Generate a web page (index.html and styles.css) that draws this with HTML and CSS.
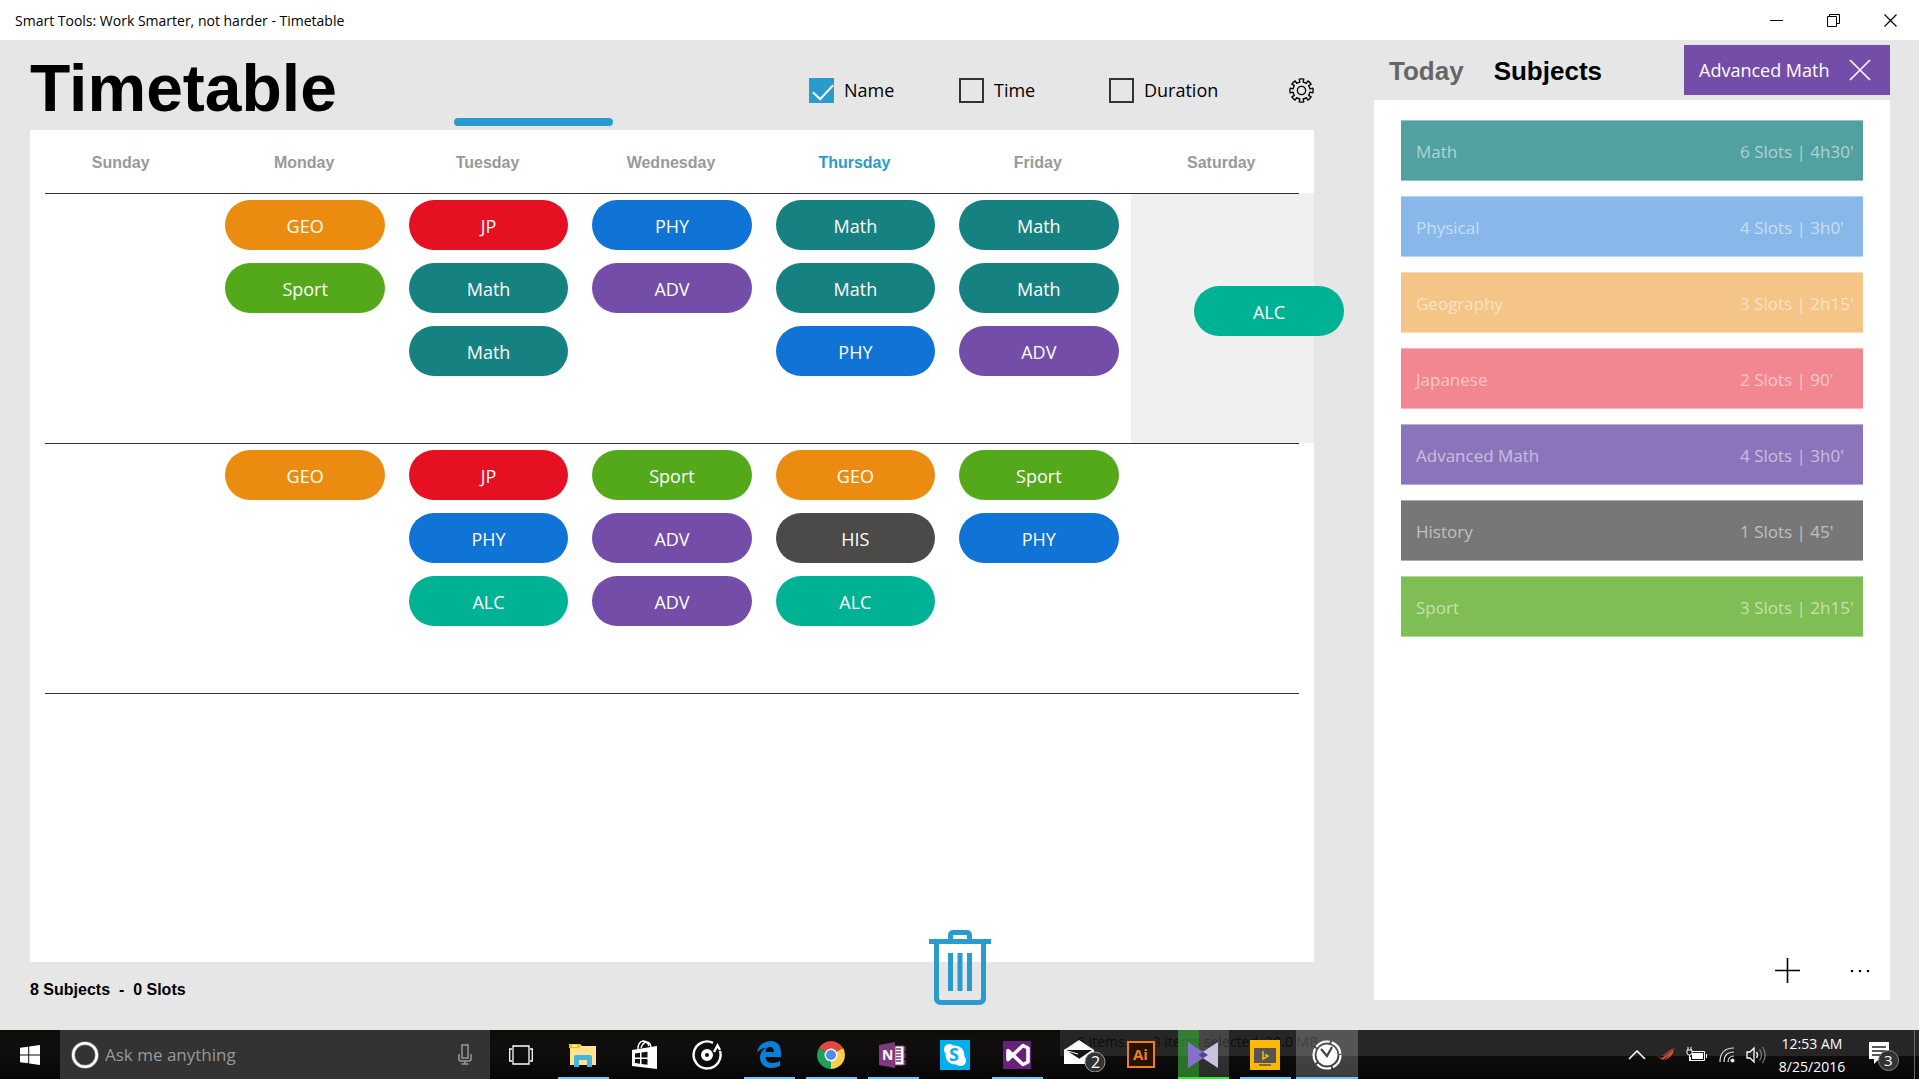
FILE: index.html
```html
<!DOCTYPE html>
<html lang="en">
<head>
    <meta charset="UTF-8">
    <title>Smart Tools: Work Smarter, not harder - Timetable</title>
    <link rel="stylesheet" href="styles.css">
</head>
<body>
    <header class="titlebar">
        <span>Smart Tools: Work Smarter, not harder - Timetable</span>
        <div class="window-controls">
            <button type="button" aria-label="Minimize"><svg width="13" height="13"><path d="M0 6.5h13" stroke="#000"/></svg></button>
            <button type="button" aria-label="Restore"><svg width="13" height="13" fill="none" stroke="#000"><path d="M.5 2.5h9v10h-9zM2.500 2.500v-2h10v9h-3"/></svg></button>
            <button type="button" aria-label="Close"><svg width="13" height="13"><path d="M.5.5l12 12M12.500.5l-12 12" stroke="#000" stroke-width="1.200"/></svg></button>
        </div>
    </header>

    <div class="app">
        <main class="main">
            <div class="toolbar">
                <h1>Timetable</h1>
                <div class="indicator"></div>
                <div class="options">
                    <label class="option"><input type="checkbox" checked>Name</label>
                    <label class="option"><input type="checkbox">Time</label>
                    <label class="option"><input type="checkbox">Duration</label>
                    <button type="button" class="icon-btn settings" aria-label="Settings">
                        <svg width="25" height="25" viewBox="0 0 26 26" fill="none" stroke="#000" stroke-width="1.4" stroke-linejoin="round">
                            <circle cx="13" cy="13" r="4.300"/>
                            <path d="M11.300 4.200L10.600 1.200A12 12 0 0 1 15.400 1.200L14.700 4.200A9 9 0 0 1 18 5.600L19.600 3A12 12 0 0 1 23 6.400L20.400 8A9 9 0 0 1 21.800 11.300L24.800 10.600A12 12 0 0 1 24.800 15.400L21.800 14.700A9 9 0 0 1 20.400 18L23 19.600A12 12 0 0 1 19.600 23L18 20.400A9 9 0 0 1 14.700 21.800L15.400 24.800A12 12 0 0 1 10.600 24.800L11.300 21.800A9 9 0 0 1 8 20.400L6.400 23A12 12 0 0 1 3 19.600L5.600 18A9 9 0 0 1 4.200 14.700L1.200 15.400A12 12 0 0 1 1.200 10.600L4.200 11.300A9 9 0 0 1 5.600 8L3 6.400A12 12 0 0 1 6.400 3L8 5.600A9 9 0 0 1 11.300 4.200Z"/>
                        </svg>
                    </button>
                </div>
            </div>

            <div class="board">
                <table class="timetable">
                    <thead>
                        <tr>
                            <th>Sunday</th>
                            <th>Monday</th>
                            <th>Tuesday</th>
                            <th>Wednesday</th>
                            <th class="current">Thursday</th>
                            <th>Friday</th>
                            <th>Saturday</th>
                        </tr>
                    </thead>
                    <tbody>
                        <tr>
                            <td></td>
                            <td><div class="slot geo">GEO</div><div class="slot sport">Sport</div></td>
                            <td><div class="slot jp">JP</div><div class="slot math">Math</div><div class="slot math">Math</div></td>
                            <td><div class="slot phy">PHY</div><div class="slot adv">ADV</div></td>
                            <td><div class="slot math">Math</div><div class="slot math">Math</div><div class="slot phy">PHY</div></td>
                            <td><div class="slot math">Math</div><div class="slot math">Math</div><div class="slot adv">ADV</div></td>
                            <td class="drop"></td>
                        </tr>
                        <tr>
                            <td></td>
                            <td><div class="slot geo">GEO</div></td>
                            <td><div class="slot jp">JP</div><div class="slot phy">PHY</div><div class="slot alc">ALC</div></td>
                            <td><div class="slot sport">Sport</div><div class="slot adv">ADV</div><div class="slot adv">ADV</div></td>
                            <td><div class="slot geo">GEO</div><div class="slot his">HIS</div><div class="slot alc">ALC</div></td>
                            <td><div class="slot sport">Sport</div><div class="slot phy">PHY</div></td>
                            <td></td>
                        </tr>
                        <tr>
                            <td></td>
                            <td></td>
                            <td></td>
                            <td></td>
                            <td></td>
                            <td></td>
                            <td></td>
                        </tr>
                    </tbody>
                </table>
                <div class="slot alc dragging">ALC</div>
                <button type="button" class="icon-btn trash" aria-label="Delete">
                    <svg width="62" height="76" viewBox="0 0 62 76" fill="none" stroke="#2b9bcd" stroke-width="5">
                        <path d="M0 11.500h62M21.500 11V5.500q0-3 3-3h13q3 0 3 3V11M7.500 12v56q0 4.500 4.500 4.500h38q4.500 0 4.500-4.500V12M21.500 23v38M31 23v38M40.500 23v38"/>
                    </svg>
                </button>
            </div>

            <p class="summary">8 Subjects&nbsp; -&nbsp; 0 Slots</p>
        </main>

        <aside class="sidebar">
            <div class="tabs">
                <button type="button" class="tab">Today</button>
                <button type="button" class="tab active">Subjects</button>
                <button type="button" class="selected-subject">Advanced Math
                    <svg width="22" height="22"><path d="M1 1l20 20M21 1L1 21" stroke="#fff" stroke-width="1.700"/></svg>
                </button>
            </div>
            <div class="panel">
                <ul class="subjects">
                    <li class="s-math"><span>Math</span><span>6 Slots | 4h30'</span></li>
                    <li class="s-phy"><span>Physical</span><span>4 Slots | 3h0'</span></li>
                    <li class="s-geo"><span>Geography</span><span>3 Slots | 2h15'</span></li>
                    <li class="s-jp"><span>Japanese</span><span>2 Slots | 90'</span></li>
                    <li class="s-adv"><span>Advanced Math</span><span>4 Slots | 3h0'</span></li>
                    <li class="s-his"><span>History</span><span>1 Slots | 45'</span></li>
                    <li class="s-sport"><span>Sport</span><span>3 Slots | 2h15'</span></li>
                </ul>
                <div class="commands">
                    <button type="button" class="icon-btn" aria-label="Add subject"><svg width="25" height="25"><path d="M0 12.500h25M12.500 0v25" stroke="#000" stroke-width="1.600"/></svg></button>
                    <button type="button" class="icon-btn" aria-label="More"><svg width="20" height="4"><circle cx="2" cy="2" r="1.300"/><circle cx="10" cy="2" r="1.300"/><circle cx="18" cy="2" r="1.300"/></svg></button>
                </div>
            </div>
        </aside>
    </div>

    <footer class="taskbar">
        <div class="behind"><span>6 items</span><span>3 items selected&nbsp; 20.0 MB</span></div>
        <button type="button" class="start" aria-label="Start">
            <svg width="20" height="20" fill="#fff"><path d="M0 2.800l8.200-1.100v7.800H0zM9.200 1.500L20 0v9.500H9.200zM0 10.500h8.200v7.800L0 17.200zM9.200 10.500H20V20L9.200 18.500z"/></svg>
        </button>
        <div class="search">
            <svg width="28" height="28"><circle cx="14" cy="14" r="11.800" fill="none" stroke="#777" stroke-width="4"/><circle cx="14" cy="14" r="11.800" fill="none" stroke="#fff" stroke-width="2.600"/></svg>
            <input type="text" placeholder="Ask me anything" aria-label="Search">
            <svg width="14" height="21" fill="none" stroke="#999" stroke-width="1.500"><path d="M4 1h6v13H4zM1 10v5q0 2 2 2h8q2 0 2-2v-5M7 17v3M3.500 20h7"/></svg>
        </div>

        <nav class="apps">
            <button type="button" aria-label="Task view"><svg width="24" height="20" fill="none" stroke="#fff" stroke-width="1.300"><path d="M4 1h16v18H4zM3 4H.7v12H3M21 4h2.300v12H21"/></svg></button>
            <button type="button" class="open" aria-label="File Explorer">
                <svg width="28" height="24" viewBox="0 0 28 24"><path d="M1 1h10l2 2h14v19H1z" fill="#ffe391"/><path d="M0 1h10l2 2-2 2H0z" fill="#f5c400"/><path d="M3 2h5v1.500H3z" fill="#fff"/><path d="M5 24V14q0-2 2-2h14q2 0 2 2v10h-5v-7h-8v7z" fill="#45b5dd"/></svg>
            </button>
            <button type="button" aria-label="Store">
                <svg width="28" height="30" viewBox="0 0 28 30"><path d="M7 9q0-7 5-8 4 0 6 5M10 8q2-6 6-6 4 1 4 6" fill="none" stroke="#fff" stroke-width="1.400"/><path d="M1 10l25-4v23L1 26z" fill="#fff"/><path d="M4 13.500l5-.7v4.700H4zM10.500 12.600l6-.8v5.700h-6zM4 19h5v4.700l-5-.7zM10.500 19h6v5.700l-6-.8z" fill="#111"/></svg>
            </button>
            <button type="button" aria-label="Groove Music">
                <svg width="30" height="30" viewBox="0 0 30 30"><path d="M21 2.800A13.500 13.500 0 1 0 28 11" fill="none" stroke="#fff" stroke-width="2.400"/><path d="M22 12l3.500-6.500L28 10" fill="none" stroke="#fff" stroke-width="2.400"/><circle cx="15" cy="15" r="4" fill="none" stroke="#fff" stroke-width="4"/></svg>
            </button>
            <button type="button" class="open" aria-label="Edge">
                <svg width="26" height="27" viewBox="0 0 26 27"><path d="M1 12Q3 1 14 0Q25 0 25 13v3H9.500q.5 6 7 6 4 0 7.500-2v5Q20 27 15 27 4 26 4 16 4.500 10 10 7 4 7 1 12zM9.500 11H18q0-5-4-5-4 0-4.500 5z" fill="#0a7fdc"/></svg>
            </button>
            <button type="button" class="open" aria-label="Chrome">
                <svg width="28" height="28" viewBox="0 0 28 28"><path d="M14 14L1.900 7A14 14 0 0 1 26.100 7z" fill="#e04a3f"/><path d="M14 14L26.100 7A14 14 0 0 1 14 28z" fill="#fcd04b"/><path d="M14 14V28A14 14 0 0 1 1.900 7z" fill="#1fa05b"/><path d="M14 14l6 3.500L14 28z" fill="#fcd04b"/><path d="M14 7.500h12.400L26 7H14z" fill="#e04a3f"/><circle cx="14" cy="14" r="6.500" fill="#fff"/><circle cx="14" cy="14" r="5" fill="#4c8bf5"/></svg>
            </button>
            <button type="button" class="open" aria-label="OneNote">
                <svg width="28" height="26" viewBox="0 0 28 26"><path d="M16 4h9v19h-9z" fill="#fff" stroke="#80397b"/><path d="M17 7h5M17 10h5M17 13h5M17 16h5M17 19h5M26 4v5M26 11v5M26 18v5" stroke="#80397b" stroke-width="1.500"/><path d="M0 3l16-3v26L0 23z" fill="#80397b"/><text class="bold" x="3" y="18" font-size="14" fill="#fff">N</text></svg>
            </button>
            <button type="button" aria-label="Skype">
                <svg width="30" height="30"><path d="M0 0h30v30H0z" fill="#00aff0"/><circle cx="15" cy="15" r="9.500" fill="#fff"/><circle cx="9.500" cy="9.500" r="5.500" fill="#fff"/><circle cx="20.500" cy="20.500" r="5.500" fill="#fff"/><text class="bold" x="9" y="21" font-size="18" fill="#00aff0">S</text></svg>
            </button>
            <button type="button" class="open" aria-label="Visual Studio">
                <svg width="28" height="28"><path d="M0 0h28v28H0z" fill="#68217a"/><path d="M20 4.500L5 18.500V9.500L20 23.500l5-2.500V7z" fill="none" stroke="#fff" stroke-width="3.600" stroke-linejoin="round"/></svg>
            </button>
            <button type="button" aria-label="Mail, 2 new">
                <svg class="mail" width="42" height="34" viewBox="0 0 42 34"><path d="M0 12L15 2l15 10v14H0z" fill="#fff"/><path d="M2 12h26l-13 9z" fill="#151515"/><path d="M0 12l14 4M0 12l15 9" stroke="#fff"/><circle cx="31" cy="24" r="10" fill="#333" stroke="#999"/><text x="27" y="30" font-size="16" fill="#fff">2</text></svg>
            </button>
            <button type="button" aria-label="Illustrator">
                <svg width="28" height="27"><path d="M1 1h26v25H1z" fill="#261300" stroke="#f47b20" stroke-width="2"/><text class="bold" x="6" y="19" font-size="15" fill="#f47b20">Ai</text></svg>
            </button>
            <button type="button" class="busy" aria-label="KMPlayer">
                <svg width="30" height="26"><path d="M0 0l20 13L0 26z" fill="#8372c8"/><path d="M30 0L10 13l20 13z" fill="#c9c2e0"/><path d="M15 9.800l5 3.200-5 3.200-5-3.200z" fill="#54409c"/></svg>
            </button>
            <button type="button" class="open" aria-label="Video">
                <svg width="30" height="30"><path d="M0 0h30v30H0z" fill="#fdb900"/><path d="M4 8h22v15H4z" fill="#555"/><path d="M9 25h12" stroke="#555" stroke-width="1.500"/><path d="M13 11v8l5-3-3-1.500" fill="none" stroke="#fdb900" stroke-width="1.500"/></svg>
            </button>
            <button type="button" class="open focused" aria-label="Smart Tools">
                <svg width="30" height="30"><circle cx="15" cy="15" r="13.500" fill="none" stroke="#fff" stroke-width="2.200" stroke-dasharray="15 2"/><circle cx="15" cy="15" r="10.500" fill="#fff"/><path d="M9 9l6 7 5-9" fill="none" stroke="#444" stroke-width="2.200"/></svg>
            </button>
        </nav>

        <div class="tray">
            <svg width="18" height="10" fill="none" stroke="#fff" stroke-width="1.600"><path d="M1 9l8-8 8 8"/></svg>
            <svg width="18" height="14"><path d="M0 8l5 2L16 1q2 3-3 8l-6 4 5-6-6 5z" fill="#d8473d"/><path d="M5 8l9-7 4-1-9 8z" fill="#8b3a35"/></svg>
            <svg width="22" height="15"><path d="M4.500 13.500v-3.500M6.500 4.500h12v9H3.500M20.500 7v4" fill="none" stroke="#fff"/><path d="M6 6h11v6H6z" fill="#fff"/><path d="M1 3h5v3q0 2-2.500 2T1 6z" fill="#222" stroke="#fff"/><path d="M2 0v3M5 0v3M3.500 8v6" stroke="#fff"/></svg>
            <svg width="16" height="16" fill="none" stroke="#ddd" stroke-width="1.200"><path d="M1 15Q1 1 15 1M5 15Q5 5 15 5M9 15q0-6 6-6"/><circle cx="13.500" cy="13.500" r="1.500" fill="#fff"/></svg>
            <svg width="20" height="18" fill="none" stroke="#fff" stroke-width="1.300"><path d="M1 6h3l4-4v14l-4-4H1zM10.500 6q2 3 0 6"/><path d="M13.500 3.500q4 5.500 0 11M16.500 1q5.500 8 0 16" stroke="#777"/></svg>
        </div>
        <time class="clock"><span>12:53 AM</span><span>8/25/2016</span></time>
        <button type="button" class="notifications" aria-label="3 notifications">
            <svg width="32" height="32"><path d="M1 3h20v17H11l-5 5v-5H1z" fill="#fff"/><path d="M4 8h14M4 12h14M4 16h14" stroke="#222" stroke-width="1.500"/><circle cx="20.500" cy="21.500" r="10" fill="#333" stroke="#888"/><text x="16" y="27" font-size="15" fill="#fff">3</text></svg>
        </button>
    </footer>
</body>
</html>
```

FILE: styles.css
```css
* {
    box-sizing: border-box;
}

body {
    display: flex;
    flex-direction: column;
    height: 100vh;
    margin: 0;
    overflow: hidden;
    background-color: #e6e6e6;
    color: #000;
    font-family: "Open Sans", "Noto Sans", sans-serif;
    font-size: 17px;
}

button {
    padding: 0;
    border: none;
    background: none;
    color: inherit;
    font: inherit;
    cursor: pointer;
}

svg {
    display: block;
    flex: none;
}

.bold {
    font-weight: bold;
}

/* Title bar */
.titlebar {
    display: flex;
    align-items: center;
    justify-content: space-between;
    height: 40px;
    padding-left: 15px;
    background-color: #fff;
    font-size: 14px;
}

.window-controls {
    display: flex;
    height: 100%;
}

.window-controls button {
    display: flex;
    align-items: center;
    justify-content: center;
    width: 57px;
}

/* App layout */
.app {
    display: grid;
    grid-template-columns: 1fr 516px;
    gap: 60px;
    flex: 1;
    min-height: 0;
    padding: 0 29px 0 30px;
}

.main,
.sidebar {
    display: flex;
    flex-direction: column;
    min-height: 0;
}

.toolbar {
    position: relative;
    display: flex;
    align-items: center;
    justify-content: space-between;
    height: 90px;
    padding-top: 10px;
}

h1 {
    margin: 0;
    padding-bottom: 4px;
    font-family: "Liberation Sans", sans-serif;
    font-size: 66px;
    line-height: 76px;
}

.indicator {
    position: absolute;
    bottom: 4px;
    left: 33%;
    width: 159px;
    height: 8px;
    border-radius: 4px;
    background-color: #2b9bcd;
}

.options {
    display: flex;
    align-items: center;
    font-size: 18px;
    line-height: 24px;
}

.option {
    display: flex;
    align-items: center;
    gap: 10px;
    width: 150px;
}

.option input {
    appearance: none;
    width: 25px;
    height: 25px;
    margin: 0;
    border: 2px solid #333;
}

.option input:checked {
    border: none;
    background-color: #2b9bcd;
}

.option input:checked::before {
    content: "";
    display: block;
    width: 18px;
    height: 9px;
    margin: 6px 0 0 4px;
    border: solid #fff;
    border-width: 0 0 2px 2px;
    transform: rotate(-47deg);
}

.settings {
    margin-left: 30px;
}

/* Timetable */
.board {
    position: relative;
    flex: 1;
    background-color: #fff;
}

.timetable {
    width: 100%;
    height: 100%;
    border-collapse: collapse;
    table-layout: fixed;
}

.timetable th {
    height: 63px;
    padding: 2px 2px 0 0;
    color: #999;
    font-family: "Liberation Sans", sans-serif;
    font-size: 16px;
}

.timetable th.current {
    color: #2b9bcd;
}

.timetable tbody tr {
    height: 250px;
    background: linear-gradient(#333, #333) 15px 0 / calc(100% - 30px) 1px no-repeat;
}

.timetable tbody tr:last-child {
    height: auto;
}

.timetable td {
    padding: 7px 12px;
    vertical-align: top;
}

.timetable td.drop {
    background-color: rgba(0, 0, 0, 0.06);
}

.slot {
    height: 50px;
    margin-bottom: 13px;
    border-radius: 25px;
    color: #fff;
    font-size: 18px;
    line-height: 52px;
    text-align: center;
}

.slot.dragging {
    position: absolute;
    top: 156px;
    right: -30px;
    width: 150px;
}

.geo { background-color: #eb8c10; }
.sport { background-color: #54a91b; }
.jp { background-color: #e51022; }
.math { background-color: #158180; }
.phy { background-color: #1073d6; }
.adv { background-color: #744da9; }
.alc { background-color: #00b294; }
.his { background-color: #4c4a48; }

.trash {
    position: absolute;
    bottom: -44px;
    left: 70%;
}

.summary {
    height: 68px;
    margin: 0;
    font-family: "Liberation Sans", sans-serif;
    font-size: 16px;
    font-weight: bold;
    line-height: 56px;
}

/* Sidebar */
.tabs {
    display: flex;
    align-items: center;
    gap: 30px;
    height: 60px;
    padding-left: 15px;
}

.tab {
    padding-top: 3px;
    color: #666;
    font-family: "Liberation Sans", sans-serif;
    font-size: 26px;
    font-weight: bold;
}

.tab.active {
    color: #000;
}

.selected-subject {
    display: flex;
    align-items: center;
    justify-content: space-between;
    width: 206px;
    height: 50px;
    margin-left: auto;
    padding: 0 19px 0 15px;
    background-color: #744da9;
    color: #fff;
    font-size: 18px;
}

.panel {
    display: flex;
    flex-direction: column;
    flex: 1;
    margin-bottom: 30px;
    padding: 20px 27px 17px;
    background-color: #fff;
}

.subjects {
    display: flex;
    flex-direction: column;
    gap: 15px;
    margin: 0;
    padding: 0;
    list-style: none;
}

.subjects li {
    display: grid;
    grid-template-columns: 1fr 123px;
    align-items: center;
    height: 61px;
    padding: 2px 0 0 15px;
    border: solid rgba(255, 255, 255, 0.4);
    border-width: 1px 0;
    color: rgba(255, 255, 255, 0.55);
    white-space: nowrap;
}

.s-math { background-color: #50a1a0; }
.s-phy { background-color: #88b8ea; }
.s-geo { background-color: #f4c587; }
.s-jp { background-color: #f28791; }
.s-adv { background-color: #8c74bb; }
.s-his { background-color: #777; }
.s-sport { background-color: #7fbe54; }

.commands {
    display: flex;
    align-items: center;
    justify-content: flex-end;
    gap: 50px;
    margin: auto -7px 0 0;
}

/* Taskbar */
.taskbar {
    position: relative;
    display: flex;
    height: 49px;
    background: linear-gradient(#0c0d08, #100f0e 40%, #070606);
    color: #fff;
}

.taskbar > * {
    position: relative;
}

/* status bar of the window showing through the taskbar */
.taskbar .behind {
    position: absolute;
    top: 0;
    right: 0;
    left: 1060px;
    display: flex;
    gap: 28px;
    height: 26px;
    padding-left: 17px;
    background-color: #262626;
    color: #0c0c0c;
    font-size: 14px;
    line-height: 24px;
}

.start {
    display: flex;
    align-items: center;
    justify-content: center;
    width: 60px;
}

.search {
    display: flex;
    align-items: center;
    gap: 6px;
    width: 430px;
    padding: 0 18px 0 11px;
    background-color: #333;
}

.search input {
    flex: 1;
    min-width: 0;
    padding: 0;
    border: none;
    background: none;
    color: #fff;
    font: inherit;
}

.search input::placeholder {
    color: #999;
}

.apps {
    display: flex;
}

.apps button {
    position: relative;
    display: flex;
    align-items: center;
    justify-content: center;
    width: 62px;
}

.apps .open::after,
.apps .busy::after {
    content: "";
    position: absolute;
    right: 5px;
    bottom: 0;
    left: 6px;
    height: 2px;
    background-color: #76c5f0;
}

.apps .busy {
    background: linear-gradient(to right, transparent 6px, rgba(66, 180, 62, 0.6) 6px, rgba(66, 180, 62, 0.6) 27px, rgba(255, 255, 255, 0.15) 27px, rgba(255, 255, 255, 0.15) 57px, transparent 57px);
}

.apps .busy::after {
    background-color: #4fd845;
}

.apps .focused {
    background-color: rgba(255, 255, 255, 0.22);
}

.apps .focused::after {
    right: 0;
    left: 0;
}

.mail {
    margin-left: 11px;
}

.tray {
    display: flex;
    align-items: center;
    gap: 11px;
    margin-left: auto;
}

.clock {
    display: flex;
    flex-direction: column;
    align-items: center;
    justify-content: center;
    width: 92px;
    font-size: 14px;
    line-height: 23px;
}

.notifications {
    display: flex;
    align-items: center;
    width: 57px;
    margin-right: 4px;
    padding-left: 10px;
    border-right: 1px solid #666;
}
```
